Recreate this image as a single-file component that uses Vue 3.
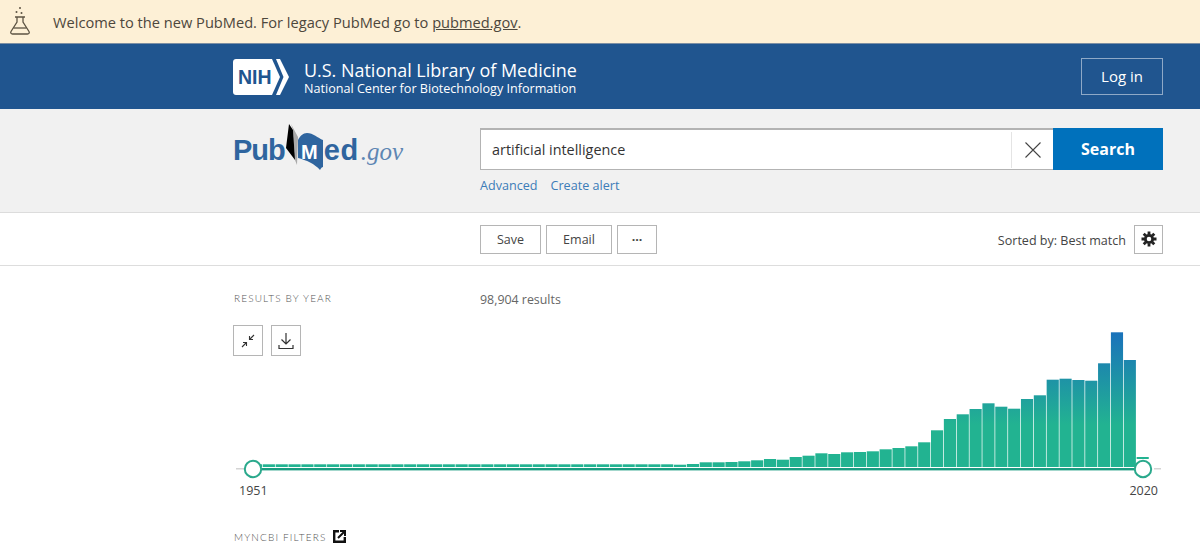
<script setup>
const tops = [360,332.3,363.3,380.7,380,378.7,379.7,395.3,399,408.7,406.7,403.3,409,414.3,419,430.3,442.3,446.3,448,449.3,451.3,452,452.3,454,453.3,455.7,457,459.7,459,460.3,461.3,462,462.3,462.3,464,464.7];
const originX = 233, originY = 325, base = 467, barW = 12.85;
const bars = [];
for (let i = 0; i < 70; i++) {
  let top = 464.3;
  if (i >= 33 && i < 69) top = tops[68 - i];
  bars.push({ x: 249.6 + i * barW - originX, y: top - originY, h: base - top });
}
bars[69] = { x: 249.6 + 69 * barW - originX, y: 457 - originY, h: 2 };
</script>

<template>
  <div class="page">
    <div class="banner">
      <svg class="flask" width="24" height="36" viewBox="0 0 24 36" fill="none" stroke="#5c5343" stroke-width="1.3">
        <circle cx="12" cy="8" r="1" fill="#5c5343" stroke="none" />
        <circle cx="8.5" cy="12" r="1" fill="#5c5343" stroke="none" />
        <circle cx="13.5" cy="13" r="1" fill="#5c5343" stroke="none" />
        <path d="M7 17h10M9 17v5L3 31.5c-.7 1.3 0 2.5 1.5 2.5h15c1.5 0 2.200-1.200 1.500-2.500L15 22v-5" />
        <path d="M5.500 28h13" />
      </svg>
      <span class="banner-text">Welcome to the new PubMed. For legacy PubMed go to <a class="banner-link">pubmed.gov</a>.</span>
    </div>

    <header class="nih">
      <div class="nih-inner">
        <div class="nih-brand">
          <div class="nih-logo">
            <svg class="nih-shape" width="56" height="36" viewBox="0 0 56 36">
              <path d="M3 0h36l8 18-8 18H3c-1.700 0-3-1.300-3-3V3c0-1.700 1.300-3 3-3z" fill="#fff" />
              <path d="M43 0h4l9 18-9 18h-4l7.500-18z" fill="#fff" />
            </svg>
            <span class="nih-mark">NIH</span>
          </div>
          <div class="nih-names">
            <div class="nlm">U.S. National Library of Medicine</div>
            <div class="ncbi">National Center for Biotechnology Information</div>
          </div>
        </div>
        <button class="login">Log in</button>
      </div>
    </header>

    <section class="search">
      <div class="logo">
        <span class="pub">Pub</span>
        <svg class="book" width="46" height="50" viewBox="0 0 46 50">
          <path d="M8 1L15 14L14 42L12 37L10 7Z" fill="#a9a9a9" />
          <path d="M6 1L10 7L12 37L3 25Z" fill="#000" />
          <path d="M15 17C17 13 20 10 24 10C30 10 35 15 40 17L40 44C39 44 38 45 37 47C32 41 23 37 15 35Z" fill="#2f659f" />
        </svg>
        <span class="m">M</span>
        <span class="ed">ed</span>
        <span class="gov">.gov</span>
      </div>
      <div class="search-form">
        <div class="search-row">
          <div class="search-input">
            <span class="query">artificial intelligence</span>
            <span class="clear">
              <svg width="16" height="16" viewBox="0 0 16 16" stroke="#444" stroke-width="1.100" fill="none"><path d="M.5.500l15 15M15.500.500l-15 15" /></svg>
            </span>
          </div>
          <button class="search-btn">Search</button>
        </div>
        <div class="search-links">
          <a>Advanced</a>
          <a>Create alert</a>
        </div>
      </div>
    </section>

    <div class="toolbar">
      <div class="actions">
        <button class="btn save">Save</button>
        <button class="btn email">Email</button>
        <button class="btn more">···</button>
      </div>
      <div class="sort">
        <span class="sort-label">Sorted by: Best match</span>
        <button class="btn gear">
          <svg width="16" height="16" viewBox="0 0 16 16" fill="none" stroke="#222">
            <circle cx="8" cy="8" r="3.700" stroke-width="2.800" />
            <path stroke-width="2.800" d="M8 .5v3M8 12.500v3M.5 8h3M12.500 8h3M2.700 2.700l2.100 2.100M11.200 11.200l2.100 2.100M13.300 2.700l-2.100 2.100M4.800 11.200l-2.100 2.100" />
          </svg>
        </button>
      </div>
    </div>

    <main class="results">
      <div class="results-head">
        <div class="section-label year-label">RESULTS BY YEAR</div>
        <div class="count">98,904 results</div>
      </div>
      <div class="timeline">
        <div class="timeline-tools">
          <button class="btn tool">
            <svg width="16" height="16" viewBox="0 0 16 16" fill="none" stroke="#333" stroke-width="1.100">
              <path d="M14 2L9.500 6.500M9.500 3v3.500H13M2 14l4.500-4.500M6.500 13V9.500H3" />
            </svg>
          </button>
          <button class="btn tool">
            <svg width="16" height="18" viewBox="0 0 16 18" fill="none" stroke="#333" stroke-width="1.200">
              <path d="M8 1v11M3.500 7.500L8 12l4.500-4.500M1 13v3.500h14V13" />
            </svg>
          </button>
        </div>
        <svg class="chart" width="930" height="157" viewBox="0 0 930 157">
          <defs>
            <linearGradient id="barFill" gradientUnits="userSpaceOnUse" x1="0" y1="7" x2="0" y2="100">
              <stop offset="0" stop-color="#1a72bb" />
              <stop offset="1" stop-color="#22b391" />
            </linearGradient>
          </defs>
          <rect
            v-for="(b, i) in bars"
            :key="i"
            :x="b.x + 0.35"
            :y="b.y"
            :width="barW - 0.7"
            :height="b.h"
            fill="url(#barFill)"
          />
          <rect x="3" y="143" width="8" height="1.500" fill="#d4d4d4" />
          <rect x="921" y="143" width="7" height="1.500" fill="#d4d4d4" />
          <rect x="20" y="143" width="890" height="2.400" fill="#1a9c80" />
          <circle cx="20" cy="144" r="8.200" fill="#fff" stroke="#2aa98c" stroke-width="2" />
          <circle cx="910" cy="144" r="8.200" fill="#fff" stroke="#2aa98c" stroke-width="2" />
        </svg>
        <div class="years">
          <span>1951</span>
          <span>2020</span>
        </div>
      </div>
      <div class="filters">
        <span class="section-label">MYNCBI FILTERS</span>
        <svg width="13" height="13" viewBox="0 0 13 13" fill="none" stroke="#111" stroke-width="2.400">
          <path d="M6 1.200H1.200v10.600h10.600V7" />
          <path d="M5 8l6-6M7 1h5v5" stroke-width="2" />
        </svg>
      </div>
    </main>
  </div>
</template>

<style scoped>
.page {
  width: 1200px;
  height: 546px;
  overflow: hidden;
  font-family: "Open Sans", "Liberation Sans", sans-serif;
  background: #fff;
  color: #333;
}
button {
  font-family: inherit;
  cursor: pointer;
}
.banner {
  height: 43px;
  background: #fdf0d6;
  border-bottom: 1px solid #7d8fa3;
  display: flex;
  align-items: center;
  padding-left: 8px;
}
.flask {
  margin-top: -7px;
}
.banner-text {
  margin-left: 21px;
  font-size: 14.630px;
  color: #4d473c;
}
.banner-link {
  text-decoration: underline;
}
.nih {
  height: 65px;
  background: #20558f;
}
.nih-inner {
  margin-left: 233px;
  width: 930px;
  height: 100%;
  display: flex;
  align-items: center;
  justify-content: space-between;
}
.nih-brand {
  display: flex;
  align-items: center;
  padding-top: 1px;
}
.nih-logo {
  position: relative;
  width: 56px;
  height: 36px;
}
.nih-shape {
  display: block;
}
.nih-mark {
  position: absolute;
  left: 5px;
  top: 6px;
  font-family: "Liberation Sans", sans-serif;
  font-size: 19.500px;
  font-weight: 700;
  line-height: 24px;
  color: #20558f;
}
.nih-names {
  margin-left: 15px;
  color: #fff;
}
.nlm {
  font-size: 17.950px;
  line-height: 22px;
}
.ncbi {
  font-size: 12.600px;
  line-height: 15px;
}
.login {
  width: 82px;
  height: 37px;
  margin-top: -1px;
  background: transparent;
  border: 1px solid #8fa9c7;
  color: #fff;
  font-size: 15px;
}
.search {
  height: 103px;
  background: #f1f1f1;
  border-bottom: 1px solid #dcdcdc;
  display: flex;
  padding-left: 233px;
}
.logo {
  width: 247px;
  height: 60px;
  display: flex;
  align-items: baseline;
  position: relative;
  padding-top: 16px;
  color: #2f659f;
  font-family: "Liberation Sans", sans-serif;
  font-weight: 700;
}
.pub,
.ed {
  font-size: 29px;
  line-height: 50px;
  letter-spacing: -1px;
}
.book {
  position: absolute;
  left: 50px;
  top: 14px;
}
.m {
  position: absolute;
  left: 68px;
  top: 33px;
  font-size: 20px;
  line-height: 20px;
  color: #fff;
}
.ed {
  margin-left: 39px;
  letter-spacing: 0.5px;
}
.gov {
  margin-left: 2px;
  font-family: "Liberation Serif", serif;
  font-style: italic;
  font-weight: 400;
  font-size: 25px;
  color: #5d86b3;
}
.search-form {
  width: 683px;
  padding-top: 19px;
}
.search-row {
  display: flex;
  height: 42px;
}
.search-input {
  flex: 1;
  display: flex;
  align-items: center;
  justify-content: space-between;
  background: #fff;
  border: 1px solid #b3b3b3;
  border-top-width: 2px;
  border-right: none;
  padding-left: 11px;
  box-sizing: border-box;
}
.query {
  font-size: 14.400px;
  color: #333;
}
.clear {
  width: 41px;
  height: 36px;
  border-left: 1px solid #e4e4e4;
  display: flex;
  align-items: center;
  justify-content: center;
}
.search-btn {
  width: 110px;
  background: #0071bc;
  border: none;
  color: #fff;
  font-size: 16px;
  font-weight: 700;
}
.search-links {
  display: flex;
  gap: 13px;
  margin-top: 7px;
  font-size: 12.600px;
  line-height: 18px;
  color: #3c7cb8;
}
.toolbar {
  height: 52px;
  border-bottom: 1px solid #ddd;
  display: flex;
  align-items: center;
  justify-content: space-between;
  padding: 0 37px 0 480px;
}
.actions {
  display: flex;
  gap: 5px;
}
.btn {
  height: 29px;
  padding: 1px 0 0;
  background: #fff;
  border: 1px solid #b5b5b5;
  color: #444;
  font-size: 12.500px;
  display: flex;
  align-items: center;
  justify-content: center;
}
.save {
  width: 61px;
}
.email {
  width: 66px;
}
.more {
  width: 40px;
  font-weight: 700;
}
.sort {
  display: flex;
  align-items: center;
  gap: 8px;
}
.sort-label {
  padding-top: 2px;
  font-size: 12.550px;
  color: #444;
}
.gear {
  width: 29px;
  padding: 0;
}
.results {
  padding: 24px 0 0 233px;
}
.results-head {
  display: flex;
  height: 35px;
}
.section-label {
  margin-left: 1px;
  font-family: Lato, "Open Sans", sans-serif;
  font-size: 10px;
  font-weight: 300;
  letter-spacing: 1.150px;
  color: #555;
}
.year-label {
  width: 246px;
  line-height: 16px;
}
.count {
  padding-top: 1px;
  font-size: 12.400px;
  line-height: 18px;
  color: #666;
}
.timeline {
  position: relative;
  width: 930px;
}
.timeline-tools {
  position: absolute;
  left: 0;
  top: 0;
  display: flex;
  gap: 8px;
}
.tool {
  width: 30px;
  height: 31px;
  padding: 0;
}
.chart {
  display: block;
}
.years {
  display: flex;
  justify-content: space-between;
  padding: 0 5px 0 6px;
  font-size: 12.500px;
  line-height: 18px;
  color: #444;
}
.filters {
  display: flex;
  align-items: center;
  gap: 7px;
  margin-top: 30px;
}
</style>

<style>
html, body {
  margin: 0;
  overflow: hidden;
}
</style>
